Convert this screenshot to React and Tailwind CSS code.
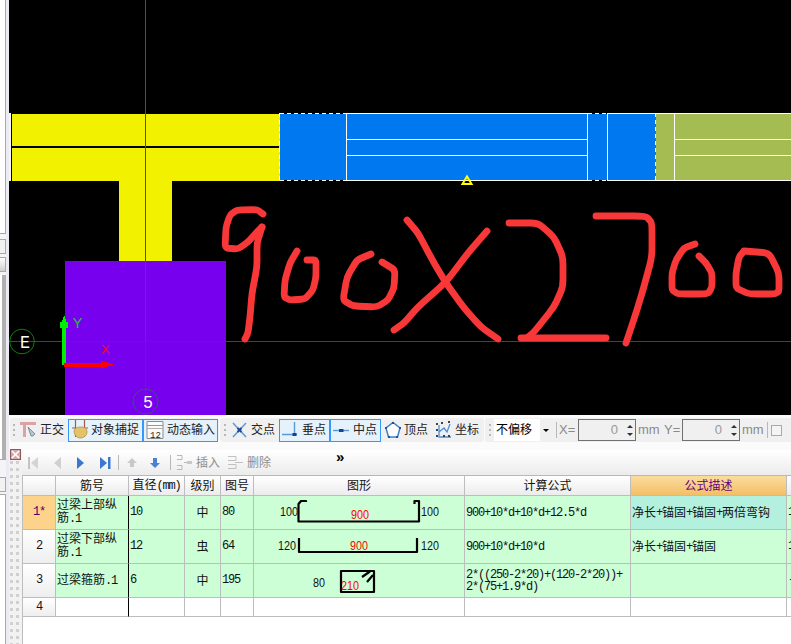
import React from "react";

const cjk = "[font-family:'Liberation_Sans','Noto_Sans_CJK_SC',sans-serif] text-[12px] leading-[14px]";
const mono = "[font-family:'Liberation_Mono',monospace] text-[12px] leading-[17px] tracking-[-1.2px]";
const narrow = "[font-family:'Liberation_Mono',monospace] tracking-[-1.2px]";

const strokes = [
  [[263,214],[257,209.5],[237,210],[230,215],[226,227],[225,248],[238,249],[248,242],[257,232],[262,227]],
  [[262,227],[257,243],[257,267],[252,293],[250,317],[248,333],[245,339]],
  [[297,251],[290,263],[285,280],[284,297],[290,300],[305,299],[313,290],[316,277],[316,260],[307,260]],
  [[371,254],[357,260],[347,277],[343,300],[353,306],[377,307],[388,300],[394,288],[395,270],[382,262]],
  [[407,220],[418,233],[434,263],[446,283],[464,308],[481,327],[498,339]],
  [[487,231],[468,253],[446,282],[418,307],[404,323],[394,330]],
  [[509,223],[538,223],[554,237],[563,257],[563,287],[554,307],[534,332],[528,337]],
  [[521,338],[606,338]],
  [[596,216],[646,216],[652,223],[652,257],[643,290],[636,313],[626,343]],
  [[695,244],[684,248],[676,260],[672,273],[672,290],[678,294],[708,294],[712,287],[712,273],[706,263],[699,256]],
  [[744,251],[769,253],[779,273],[779,294],[749,294],[736,288],[736,273],[739,257],[744,251]],
];

function smooth(pts) {
  let d = `M${pts[0][0]} ${pts[0][1]}`;
  for (let i = 1; i < pts.length - 1; i++) {
    d += `L${(pts[i - 1][0] + pts[i][0] * 3) / 4} ${(pts[i - 1][1] + pts[i][1] * 3) / 4}Q${pts[i][0]} ${pts[i][1]} ${(pts[i][0] * 3 + pts[i + 1][0]) / 4} ${(pts[i][1] * 3 + pts[i + 1][1]) / 4}`;
  }
  const last = pts[pts.length - 1];
  return d + `L${last[0]} ${last[1]}`;
}

function Canvas() {
  return (
    <svg viewBox="9 0 782 415" className="block w-[782px] h-[415px] bg-black">
      <g shapeRendering="crispEdges">
        <rect x="9" y="113" width="2" height="68" fill="#f4f4f4" />
        <rect x="12" y="114" width="268" height="67" fill="#f2f200" />
        <rect x="12" y="146" width="267" height="2" fill="#000" />
        <rect x="119" y="181" width="53" height="80" fill="#f2f200" />
        <rect x="65" y="261" width="161" height="154" fill="#7700ee" />
        <rect x="280" y="114" width="376" height="66" fill="#0078f0" />
        <rect x="656" y="114" width="135" height="66" fill="#a5bc52" />
        <path d="M346 113.5H588M608 113.5H791M346 180.5H588M608 180.5H791M346.5 113V181M587.5 113V181M607.5 113V181M674.5 114V180M346 139.5H587M346 155.5H587M674 139.5H791M674 155.5H791" stroke="#fff" strokeWidth="1" fill="none" />
        <path d="M280 113.5H346M280 180.5H346M588 113.5H608M588 180.5H608M279.5 113V181M655.5 113V181" stroke="#fff" strokeWidth="1" strokeDasharray="4 3" fill="none" />
        <path d="M145.5 0V341" stroke="#107a10" strokeWidth="1" />
        <path d="M145.5 341V415" stroke="#e80000" strokeWidth="1" />
        <path d="M9 341.5H791" stroke="#e00000" strokeWidth="1" />
      </g>
      <path d="M462.5 184L471.5 184L467 176.5Z" fill="none" stroke="#ffff00" strokeWidth="2" />
      <g fill="none" stroke="#f83838" strokeWidth="6.8" strokeLinecap="round" strokeLinejoin="round">
        {strokes.map((p, i) => <path key={i} d={smooth(p)} />)}
      </g>
      <circle cx="22" cy="341.5" r="12.3" fill="none" stroke="#0c800c" strokeWidth="1" />
      <circle cx="145.5" cy="401.5" r="12.5" fill="none" stroke="#0c800c" strokeWidth="1" />
      <text x="20" y="348" fill="#fff" fontFamily="'Liberation Mono', monospace" fontSize="19" textLength="10" lengthAdjust="spacingAndGlyphs">E</text>
      <text x="143" y="408" fill="#fff" fontFamily="'Liberation Mono', monospace" fontSize="19" textLength="10" lengthAdjust="spacingAndGlyphs">5</text>
      <text x="72.5" y="328" fill="#22dd22" fillOpacity="0.8" fontFamily="'Liberation Mono', monospace" fontSize="14" textLength="10" lengthAdjust="spacingAndGlyphs">Y</text>
      <text x="101" y="354" fill="#ff1010" fillOpacity="0.8" fontFamily="'Liberation Mono', monospace" fontSize="13" textLength="9" lengthAdjust="spacingAndGlyphs">X</text>
      <g shapeRendering="crispEdges">
        <rect x="62" y="322" width="4" height="43" fill="#00ee00" />
        <path d="M64 316L65 316L66 322L68 322L68 328L60 328L60 322L62 322Z" fill="#00ee00" />
        <rect x="64" y="363" width="40" height="4" fill="#ff0000" />
        <path d="M101 361L109 363L113 364L113 366L109 366L101 369Z" fill="#ff0000" />
      </g>
    </svg>
  );
}

function Sidebar() {
  const box = "border-y border-r border-[#a8a8a8]";
  return (
    <div className="w-[9px] h-full flex shrink-0 bg-[#eceaf2]">
      <div className="w-[6px] h-full flex flex-col bg-[#f4f4f8]">
        <div className={"h-[234px] bg-white border-b border-r border-[#a8a8a8]"} />
        <div className={"h-[15px] mt-[5px] bg-[#f2f2f2] " + box} />
        <div className={"h-[15px] mt-[3px] bg-gradient-to-b from-white to-[#d0d0d0] " + box} />
        <div className="h-[185px] mt-[3px] flex bg-white border-b border-[#a8a8a8]">
          <div className="w-[2px]" />
          <div className="flex-1 bg-[#b0b0b0]" />
        </div>
        <div className={"h-[15px] mt-[17px] bg-[#f2f2f2] " + box} />
        <div className="flex-1 mt-[2px] bg-white border-t border-r border-[#a8a8a8]" />
      </div>
    </div>
  );
}

function Grip() {
  return (
    <div className="w-[2px] h-[12px] flex flex-col justify-between shrink-0">
      <div className="h-[2px] bg-[#b8b8b8]" /><div className="h-[2px] bg-[#b8b8b8]" /><div className="h-[2px] bg-[#b8b8b8]" />
    </div>
  );
}

const Ic = ({ w = 16, h = 20, cls = "", children }) => (
  <svg width={w} height={h} viewBox={`0 0 ${w} ${h}`} className={"block shrink-0 " + cls}>{children}</svg>
);

const IcOrtho = () => (
  <Ic cls="ml-[5px]">
    <path d="M0 2H16V5H6V17H3V5H0Z" fill="#dba3a3" />
    <path d="M8 7L15 14L13 16L11 16Z" fill="#b9c4cf" stroke="#6d7d8d" strokeWidth="0.8" />
  </Ic>
);
const IcSnap = () => (
  <Ic w={18} cls="ml-[2px]">
    <path d="M4.5 0V17M13.5 0V17M1 8H4M14 8H17" stroke="#a35a4a" strokeWidth="1.2" fill="none" />
    <path d="M3 11C4 7 8 7 11 7C14 7 16 9 16 12C16 16 12 18 9 18C6 18 3 15 3 11Z" fill="#e3c26a" stroke="#b08a30" strokeWidth="0.7" />
  </Ic>
);
const IcDyn = () => (
  <Ic w={18} cls="ml-[2px]">
    <path d="M1 1.5H17V18.5H1Z" fill="#fafafa" stroke="#8a8a8a" strokeWidth="1" />
    <path d="M1 5.5H17" stroke="#c98080" strokeWidth="1" />
    <rect x="1" y="8" width="16" height="1" fill="#b0b0b0" />
    <text x="4" y="17.5" fontSize="9" fontFamily="'Liberation Mono', monospace" fill="#222">12</text>
  </Ic>
);
const IcCross = () => (
  <Ic w={17} cls="ml-[5px]">
    <path d="M2 3L15 17M15 3L2 17" stroke="#5b9bd5" strokeWidth="1.5" />
    <path d="M6.5 8L10.5 12M10.5 8L6.5 12" stroke="#1c4a9a" strokeWidth="2" />
  </Ic>
);
const IcPerp = () => (
  <Ic cls="ml-[2px]">
    <path d="M0 14.5H15M12.5 2V14" stroke="#5b9bd5" strokeWidth="1.4" />
    <rect x="10.5" y="13" width="4" height="3" fill="#1c3f94" />
  </Ic>
);
const IcMid = () => (
  <Ic cls="ml-[2px]">
    <path d="M0 10.5H16" stroke="#5b9bd5" strokeWidth="1.4" />
    <rect x="6" y="9" width="4.5" height="3" fill="#1c3f94" />
  </Ic>
);
const IcPent = () => (
  <Ic cls="ml-[4px]">
    <path d="M8 2.5L15 8L12.5 17H3.5L1 8Z" fill="#fff" stroke="#3f7fc4" strokeWidth="1.5" />
    <path d="M7 2h2v2H7zM0 7h2v2H0zM14 7h2v2h-2zM3 16h2v2H3zM11 16h2v2h-2z" fill="#234f9e" />
  </Ic>
);
const IcCoord = () => (
  <Ic cls="ml-[7px]">
    <path d="M4 5V17H16M4 12L9 8L12 12L15 4" stroke="#4a8fd6" strokeWidth="1.3" fill="none" />
    <path d="M1 3h2v2H1zM6 2h2v2H6zM13 1h2v2h-2zM1 9h2v2H1zM1 15h2v2H1zM8 15h2v2H8zM13 15h2v2h-2z" fill="#345" />
  </Ic>
);

function ToolBtn({ icon, label, w, gap }) {
  return (
    <div className={`${w} h-[23px] flex items-center border border-[#3399ff] bg-[#e5f1fb] shrink-0`}>
      {icon}
      <span className={cjk + " " + gap + " whitespace-nowrap text-[#222]"}>{label}</span>
    </div>
  );
}

function Spin() {
  return (
    <div className="w-[58px] h-[22px] ml-[2px] border border-[#707070] bg-[#f0f0f0] flex items-center justify-end shrink-0">
      <span className="[font-family:'Liberation_Sans',sans-serif] text-[13px] text-[#999] mr-[6px]">0</span>
      <div className="w-[11px] h-full flex flex-col items-center justify-around py-[2px]">
        <div className="w-0 h-0 border-x-[3px] border-x-transparent border-b-[3px] border-b-[#333]" />
        <div className="w-0 h-0 border-x-[3px] border-x-transparent border-t-[3px] border-t-[#333]" />
      </div>
    </div>
  );
}

const grayLabel = "[font-family:'Liberation_Sans',sans-serif] text-[13px] text-[#8a8a8a] whitespace-nowrap";

function Toolbar() {
  return (
    <div className="h-[35px] bg-[#fbfbfb] flex items-start pt-[3px] pl-[1px] gap-[1px]">
      <div className="w-[209px] h-[24px] bg-[#f0f0f0] rounded-[3px] flex items-center shrink-0">
        <div className="ml-[3px]"><Grip /></div>
        <IcOrtho />
        <span className={cjk + " ml-[4px] text-[#222] w-[24px] whitespace-nowrap"}>正交</span>
        <div className="ml-[4px] flex">
          <ToolBtn w="w-[75px]" gap="ml-[2px]" icon={<IcSnap />} label="对象捕捉" />
          <ToolBtn w="w-[75px]" gap="ml-[3px]" icon={<IcDyn />} label="动态输入" />
        </div>
      </div>
      <div className="w-[264px] h-[24px] bg-[#f0f0f0] rounded-[3px] flex items-center shrink-0">
        <div className="ml-[4px]"><Grip /></div>
        <IcCross />
        <span className={cjk + " ml-[3px] text-[#222] w-[24px] whitespace-nowrap"}>交点</span>
        <div className="ml-[4px] flex">
          <ToolBtn w="w-[51px]" gap="ml-[4px]" icon={<IcPerp />} label="垂点" />
          <ToolBtn w="w-[51px]" gap="ml-[4px]" icon={<IcMid />} label="中点" />
        </div>
        <IcPent />
        <span className={cjk + " ml-[3px] text-[#222] w-[24px] whitespace-nowrap"}>顶点</span>
        <IcCoord />
        <span className={cjk + " ml-[4px] text-[#222] w-[24px] whitespace-nowrap"}>坐标</span>
      </div>
      <div className="flex-1 h-[24px] bg-[#f0f0f0] rounded-l-[3px] flex items-center">
        <div className="ml-[4px]"><Grip /></div>
        <div className="ml-[3px] w-[57px] h-[22px] bg-white flex items-center justify-between shrink-0">
          <span className={cjk + " ml-[2px] text-black whitespace-nowrap"}>不偏移</span>
          <div className="w-[11px] h-full bg-[#f0f0f0] flex items-center justify-center">
            <div className="w-0 h-0 border-x-[3px] border-x-transparent border-t-[3px] border-t-black" />
          </div>
        </div>
        <div className="ml-[5px] w-[1px] h-[16px] bg-[#b8b8b8] shrink-0" />
        <span className={grayLabel + " ml-[2px] w-[17px]"}>X=</span>
        <Spin />
        <span className={grayLabel + " ml-[2px] w-[22px]"}>mm</span>
        <span className={grayLabel + " ml-[4px] w-[17px]"}>Y=</span>
        <div className="-ml-[1px]"><Spin /></div>
        <span className={grayLabel + " ml-[2px] w-[22px]"}>mm</span>
        <div className="ml-[3px] w-[1px] h-[16px] bg-[#b8b8b8] shrink-0" />
        <div className="ml-[3px] w-[11px] h-[11px] border border-[#aaa] bg-[#f4f4f4] shrink-0" />
      </div>
    </div>
  );
}

function Strip() {
  return (
    <div className="w-[13px] h-full shrink-0 bg-[#f2f2f2] flex flex-col">
      <svg width="11" height="11" viewBox="0 0 11 11" className="block ml-[1px] -mt-[1px] shrink-0">
        <rect x="0.5" y="0.5" width="10" height="10" fill="#d8a8a8" stroke="#8c5a5a" />
        <path d="M2 2L9 9M9 2L2 9" stroke="#fff" strokeWidth="1.6" />
      </svg>
      <div className="flex-1 ml-[1px] mt-[1px] w-[9px] grid grid-cols-2 gap-x-[3px] gap-y-[4px] content-start overflow-hidden">
        {Array.from({ length: 64 }).map((_, i) => (
          <div key={i} className="w-[3px] h-[3px] bg-[#d0d0d0]" />
        ))}
      </div>
    </div>
  );
}

function NavBar() {
  const sep = "w-[1px] h-[15px] bg-[#b8b8b8] shrink-0";
  return (
    <div className="h-[26px] border-b border-[#b8b8b8] bg-gradient-to-b from-white to-[#ececec] flex items-center relative">
      <svg width="11" height="14" viewBox="0 0 11 14" className="block ml-[6px] shrink-0">
        <rect x="0" y="1" width="2" height="12" fill="#c4c4c4" /><path d="M10 1V13L3 7Z" fill="#d4d4d4" />
      </svg>
      <svg width="8" height="14" viewBox="0 0 8 14" className="block ml-[15px] shrink-0"><path d="M7 1V13L0 7Z" fill="#d0d0d0" /></svg>
      <svg width="8" height="14" viewBox="0 0 8 14" className="block ml-[15px] shrink-0"><path d="M0 1V13L7 7Z" fill="#3a78d0" /></svg>
      <svg width="11" height="14" viewBox="0 0 11 14" className="block ml-[15px] shrink-0">
        <path d="M0 1V13L7 7Z" fill="#3a78d0" /><rect x="8" y="1" width="2.5" height="12" fill="#3a78d0" />
      </svg>
      <div className={sep + " ml-[7px]"} />
      <svg width="10" height="10" viewBox="0 0 10 10" className="block ml-[8px] shrink-0"><path d="M5 0L10 5H7V9H3V5H0Z" fill="#c8c8c8" /></svg>
      <svg width="10" height="10" viewBox="0 0 10 10" className="block ml-[13px] shrink-0"><path d="M3 0H7V5H10L5 10L0 5H3Z" fill="#4a80d8" /></svg>
      <div className={sep + " ml-[10px]"} />
      <svg width="17" height="17" viewBox="0 0 17 17" className="block ml-[5px] shrink-0">
        <path d="M1 1.5H6V5.5H1M1 11.5H6V15.5H1M8 8.5H16" fill="none" stroke="#b8b8b8" /><rect x="11" y="7" width="5" height="3" fill="#c8c8c8" />
      </svg>
      <span className={cjk + " ml-[3px] w-[24px] text-[#8d8d8d] whitespace-nowrap"}>插入</span>
      <svg width="17" height="17" viewBox="0 0 17 17" className="block ml-[7px] shrink-0">
        <path d="M1 2.5H9V6.5H1M1 10.5H9V14.5H1M8 8.5H16" fill="none" stroke="#c0c0c0" />
      </svg>
      <span className={cjk + " ml-[3px] w-[24px] text-[#8d8d8d] whitespace-nowrap"}>删除</span>
      <span className="absolute left-[314px] -top-[1px] [font-family:'Liberation_Sans',sans-serif] text-[15px] font-bold leading-[16px] text-black">»</span>
    </div>
  );
}

const Shape = ({ children }) => (
  <svg viewBox="0 0 210 33" className="block w-[210px] h-[33px]" fontFamily="'Liberation Sans', sans-serif" fontSize="12">{children}</svg>
);
const stroke = { fill: "none", stroke: "#000", strokeWidth: 2.2, strokeLinejoin: "round" };
const Num = ({ x, y, red, len = 18, children }) => (
  <text x={x} y={y} fill={red ? "#f00" : "#111"} textLength={len} lengthAdjust="spacingAndGlyphs">{children}</text>
);

const Shape1 = () => (
  <Shape>
    <path d="M52 6V5L47 5L44.5 8V25.5H165V5H160.5V8" {...stroke} />
    <Num x={26} y={20}>100</Num>
    <Num x={167} y={20}>100</Num>
    <Num x={97} y={23} red>900</Num>
  </Shape>
);
const Shape2 = () => (
  <Shape>
    <path d="M45 8V22H163V8" {...stroke} />
    <Num x={24} y={19.5}>120</Num>
    <Num x={167} y={20}>120</Num>
    <Num x={96} y={19.5} red>900</Num>
  </Shape>
);
const Shape3 = () => (
  <Shape>
    <path d="M87 7H120V28H87Z" {...stroke} />
    <path d="M108 13L116 7.5M113 18L119 11" {...stroke} />
    <Num x={59} y={22.5} len={12}>80</Num>
    <Num x={87} y={25.5} red>210</Num>
  </Shape>
);

const Dot1 = () => <span className={narrow}>.1</span>;
const Plus = () => <span className={narrow}>+</span>;

const rows = [
  { no: "1*", name: <>过梁上部纵<br />筋<Dot1 /></>, d: "10", g: "中", fig: "80", shape: <Shape1 />, formula: <>900+10*d+10*d+12.5*d</>, desc: <>净长<Plus />锚固<Plus />锚固<Plus />两倍弯钩</>, tail: "1" },
  { no: "2", name: <>过梁下部纵<br />筋<Dot1 /></>, d: "12", g: "虫", fig: "64", shape: <Shape2 />, formula: <>900+10*d+10*d</>, desc: <>净长<Plus />锚固<Plus />锚固</>, tail: "1" },
  { no: "3", name: <>过梁箍筋<Dot1 /></>, d: "6", g: "中", fig: "195", shape: <Shape3 />, formula: <>2*((250-2*20)+(120-2*20))+<br />2*(75+1.9*d)</>, desc: null, tail: "-" },
];

const line = "border-r border-b border-[#bdbdbd]";
const headCell = "flex items-center justify-center bg-gradient-to-b from-white to-[#ececec] text-[#111] whitespace-nowrap overflow-hidden " + line + " " + cjk;
const mint = "bg-[#ccffd6] flex items-center overflow-hidden " + line;

function Table() {
  return (
    <div className="flex-1 bg-white border-l border-[#bdbdbd] overflow-hidden">
      <div className="grid grid-cols-[33px_73px_56px_36px_33px_211px_166px_156px_4px] grid-rows-[20px_34px_34px_34px_19px]">
        <div className={headCell} />
        <div className={headCell}>筋号</div>
        <div className={headCell}><span>直径<span className={narrow}>(mm)</span></span></div>
        <div className={headCell}>级别</div>
        <div className={headCell}>图号</div>
        <div className={headCell}>图形</div>
        <div className={headCell}>计算公式</div>
        <div className={"flex items-center justify-center bg-gradient-to-b from-[#fbdc9e] to-[#f3bf66] text-[#660080] " + line + " " + cjk}>公式描述</div>
        <div className="bg-gradient-to-b from-white to-[#ececec] border-b border-[#bdbdbd]" />

        {rows.map((r, i) => (
          <React.Fragment key={r.no}>
            <div className={(i === 0 ? "bg-[#fdd28a] text-[#500060] " : "bg-gradient-to-b from-white to-[#eeeeee] text-[#111] ") + "flex items-center justify-center " + line + " " + mono}>{r.no}</div>
            <div className={"bg-[#ccffd6] flex items-center pl-[1px] text-[#111] border-r border-r-black border-b border-b-[#bdbdbd] overflow-hidden " + cjk}><span className="block leading-[13px]">{r.name}</span></div>
            <div className={mint + " pl-[1px] text-[#111] " + mono}>{r.d}</div>
            <div className={mint + " justify-center text-[#111] " + cjk}>{r.g}</div>
            <div className={mint + " pl-[1px] text-[#111] " + mono}>{r.fig}</div>
            <div className={mint}>{r.shape}</div>
            <div className={mint + " pl-[1px] text-[#111] whitespace-nowrap " + mono}><span className="block leading-[12px]">{r.formula}</span></div>
            <div className={(i === 0 ? "bg-[#b4f0de] " : "bg-[#ccffd6] ") + "flex items-center pl-[1px] text-[#111] whitespace-nowrap overflow-hidden " + line + " " + cjk}>{r.desc}</div>
            <div className={"bg-[#ccffd6] flex items-center pl-[1px] text-[#111] border-b border-[#bdbdbd] overflow-hidden " + mono}>{r.tail}</div>
          </React.Fragment>
        ))}

        <div className={"flex items-center justify-center bg-gradient-to-b from-white to-[#eeeeee] text-[#111] " + line + " " + mono}>4</div>
        <div className="bg-white border-r border-r-black border-b border-b-[#bdbdbd]" />
        <div className={"bg-white " + line} />
        <div className={"bg-white " + line} />
        <div className={"bg-white " + line} />
        <div className={"bg-white " + line} />
        <div className={"bg-white " + line} />
        <div className={"bg-white " + line} />
        <div className="bg-white border-b border-[#bdbdbd]" />
      </div>
    </div>
  );
}

export default function App() {
  return (
    <div className="w-[791px] h-[644px] flex overflow-hidden bg-white">
      <Sidebar />
      <div className="w-[782px] h-full flex flex-col">
        <Canvas />
        <Toolbar />
        <div className="flex-1 flex min-h-0 bg-white">
          <Strip />
          <div className="flex-1 flex flex-col min-w-0">
            <NavBar />
            <div className="flex-1 flex min-h-0"><Table /></div>
          </div>
        </div>
      </div>
    </div>
  );
}
